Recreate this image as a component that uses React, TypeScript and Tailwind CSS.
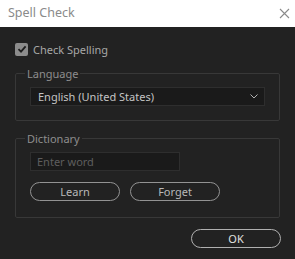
import React from "react";

export default function App() {
  const font = { fontFamily: '"Noto Sans", "Open Sans", sans-serif' };
  return (
    <div className="w-[295px] h-[259px] bg-[#222222] flex flex-col overflow-hidden" style={font}>
      <div className="h-[27px] bg-white flex items-center justify-between pl-[8px] pr-[5px]">
        <span className="text-[12.5px] text-[#8a8a8a] leading-none">Spell Check</span>
        <svg width="11" height="11" viewBox="0 0 11 11">
          <path d="M1 1 L10 10 M10 1 L1 10" stroke="#8a8a8a" strokeWidth="1.1" />
        </svg>
      </div>
      <div className="flex flex-col px-[15px] pt-[15px]">
        <div className="flex items-center gap-[5px] h-[14px]">
          <div className="w-[13px] h-[13px] rounded-[2px] bg-[#8c8c8c] flex items-center justify-center">
            <svg width="10" height="10" viewBox="0 0 10 10">
              <path d="M1.5 5.2 L4 7.6 L8.6 2.4" stroke="#1e1e1e" strokeWidth="1.8" fill="none" />
            </svg>
          </div>
          <span className="text-[11px] text-[#a8a8a8] leading-none">Check Spelling</span>
        </div>
        <fieldset className="mt-[12px] border border-[#383838] rounded-[2px] h-[53px] px-[14px] pt-[3px] m-0">
          <legend className="text-[11px] text-[#8e8e8e] px-[2px] ml-[-5px] leading-none">Language</legend>
          <div className="mt-[5px] h-[19px] bg-[#1a1a1a] border border-[#2e2e2e] flex items-center justify-between pl-[7px] pr-[6px]">
            <span className="text-[11px] text-[#c4c4c4] leading-none">English (United States)</span>
            <svg width="8" height="5" viewBox="0 0 8 5">
              <path d="M0.5 0.5 L4 4 L7.5 0.5" stroke="#b0b0b0" strokeWidth="1" fill="none" />
            </svg>
          </div>
        </fieldset>
        <fieldset className="mt-[12px] border border-[#383838] rounded-[2px] h-[85px] px-[14px] pt-[3px] m-0">
          <legend className="text-[11px] text-[#8e8e8e] px-[2px] ml-[-5px] leading-none">Dictionary</legend>
          <div className="mt-[5px] w-[150px] h-[19px] bg-[#1a1a1a] border border-[#2e2e2e] flex items-center pl-[6px]">
            <span className="text-[11px] text-[#5e5e5e] leading-none">Enter word</span>
          </div>
          <div className="mt-[11px] flex gap-[10px]">
            <div className="w-[90px] h-[19px] rounded-full border border-[#939393] flex items-center justify-center text-[11px] text-[#b8b8b8] leading-none">Learn</div>
            <div className="w-[90px] h-[19px] rounded-full border border-[#939393] flex items-center justify-center text-[11px] text-[#b8b8b8] leading-none">Forget</div>
          </div>
        </fieldset>
        <div className="flex justify-end mt-[11px]">
          <div className="w-[90px] h-[19px] rounded-full border border-[#b0b0b0] flex items-center justify-center text-[11px] text-[#e0e0e0] leading-none mr-[-1px]">OK</div>
        </div>
      </div>
    </div>
  );
}
